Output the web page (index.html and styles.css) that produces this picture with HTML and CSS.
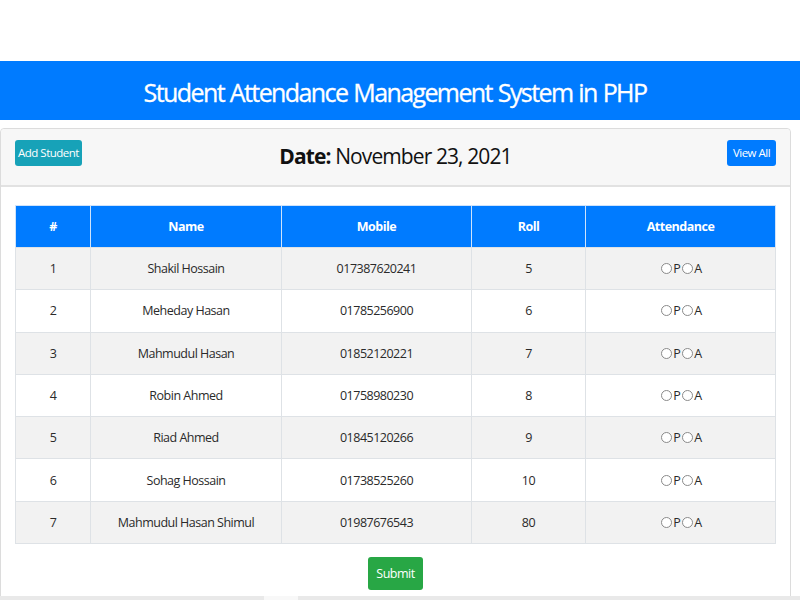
FILE: index.html
```html
<!DOCTYPE html>
<html lang="en">
<head>
<meta charset="utf-8">
<title>Student Attendance Management System in PHP</title>
<link rel="stylesheet" href="styles.css">
</head>
<body>
<header class="banner"><h1 class="banner-title">Student Attendance Management System in PHP</h1></header>
<main class="card">
  <div class="card-header">
    <div class="left"><a class="btn btn-info">Add Student</a></div>
    <h2 class="date"><b>Date:</b> November 23, 2021</h2>
    <div class="right"><a class="btn btn-primary">View All</a></div>
  </div>
  <div class="card-body">
    <table class="att-table">
      <colgroup><col class="c1"><col class="c2"><col class="c3"><col class="c4"><col class="c5"></colgroup>
      <thead><tr><th>#</th><th>Name</th><th>Mobile</th><th>Roll</th><th>Attendance</th></tr></thead>
      <tbody>
        <tr><td>1</td><td>Shakil Hossain</td><td>017387620241</td><td>5</td><td><span class="radio"></span>P<span class="radio"></span>A</td></tr>
        <tr><td>2</td><td>Meheday Hasan</td><td>01785256900</td><td>6</td><td><span class="radio"></span>P<span class="radio"></span>A</td></tr>
        <tr><td>3</td><td>Mahmudul Hasan</td><td>01852120221</td><td>7</td><td><span class="radio"></span>P<span class="radio"></span>A</td></tr>
        <tr><td>4</td><td>Robin Ahmed</td><td>01758980230</td><td>8</td><td><span class="radio"></span>P<span class="radio"></span>A</td></tr>
        <tr><td>5</td><td>Riad Ahmed</td><td>01845120266</td><td>9</td><td><span class="radio"></span>P<span class="radio"></span>A</td></tr>
        <tr><td>6</td><td>Sohag Hossain</td><td>01738525260</td><td>10</td><td><span class="radio"></span>P<span class="radio"></span>A</td></tr>
        <tr><td>7</td><td>Mahmudul Hasan Shimul</td><td>01987676543</td><td>80</td><td><span class="radio"></span>P<span class="radio"></span>A</td></tr>
      </tbody>
    </table>
    <div class="actions"><a class="btn btn-success">Submit</a></div>
  </div>
</main>
<div class="hscroll"><span class="hscroll-thumb"></span></div>
</body>
</html>
```
FILE: styles.css
```css
* { box-sizing: border-box; }
html, body { margin: 0; padding: 0; background: #fff; }
body {
  font-family: "Open Sans", "Noto Sans", sans-serif;
  color: #212529;
  padding-top: 61px;
  overflow: hidden;
  height: 600px;
}
.banner {
  background: #007bff;
  height: 59px;
  display: flex;
  align-items: center;
  justify-content: center;
  padding: 3px 10px 0 0;
}
.banner-title {
  margin: 0;
  color: #fff;
  font-weight: 400;
  font-size: 25px;
  letter-spacing: -1.6px;
  word-spacing: 1px;
  line-height: 1;
  -webkit-text-stroke: 0.3px #fff;
}
.card {
  margin: 8px 9px 0 0;
  border: 1px solid #dcdcdc;
  border-radius: 4px;
  background: #fff;
}
.card-header {
  height: 58px;
  background: #f7f7f7;
  border-bottom: 2px solid #e2e2e2;
  display: grid;
  grid-template-columns: 1fr auto 1fr;
  align-items: center;
  padding: 0 14px;
  border-radius: 4px 4px 0 0;
}
.left { display: flex; justify-content: flex-start; }
.right { display: flex; justify-content: flex-end; }
.date {
  margin: 0 0 3px;
  font-size: 21px;
  font-weight: 400;
  letter-spacing: -0.9px;
  color: #111;
}
.date b { font-weight: 700; }
.btn {
  display: inline-flex;
  align-items: center;
  justify-content: center;
  color: #fff;
  font-size: 11.5px;
  letter-spacing: -0.5px;
  white-space: nowrap;
  border-radius: 3px;
  height: 26px;
  padding: 0;
}
.btn-info { background: #17a2b8; width: 67px; margin-top: -9px; }
.btn-primary { background: #007bff; width: 49px; margin-top: -9px; }
.btn-success { background: #28a745; width: 55px; height: 33px; font-size: 12.5px; }
.card-body { padding: 18px 14px 10px; }
.att-table {
  width: 760px;
  border-collapse: collapse;
  table-layout: fixed;
  font-size: 12.5px;
  letter-spacing: -0.5px;
}
.c1 { width: 75px; }
.c2 { width: 191px; }
.c3 { width: 190px; }
.c4 { width: 114px; }
.c5 { width: 190px; }
.att-table th {
  background: #007bff;
  color: #fff;
  font-weight: 700;
  height: 42px;
  border: 1px solid #cfe3fb;
  border-bottom: 1px solid #dee2e6;
  text-align: center;
}
.att-table td {
  height: 42.3px;
  text-align: center;
  border: 1px solid #dee2e6;
  color: #2a2a2a;
}
.att-table tbody tr:nth-child(odd) td { background: #f2f2f2; }
.radio {
  display: inline-block;
  width: 11px;
  height: 11px;
  border: 1px solid #8a8a8a;
  border-radius: 50%;
  vertical-align: -1px;
  margin: 0 1px 0 2px;
  background: #fff;
}
.actions {
  display: flex;
  justify-content: center;
  padding-top: 13px;
}
.hscroll {
  position: fixed;
  left: 0;
  right: 0;
  bottom: 0;
  height: 4px;
  background: #e9e9e9;
}
.hscroll-thumb {
  position: absolute;
  left: 264px;
  width: 34px;
  top: 0;
  bottom: 0;
  background: #f8f8f8;
}
```
